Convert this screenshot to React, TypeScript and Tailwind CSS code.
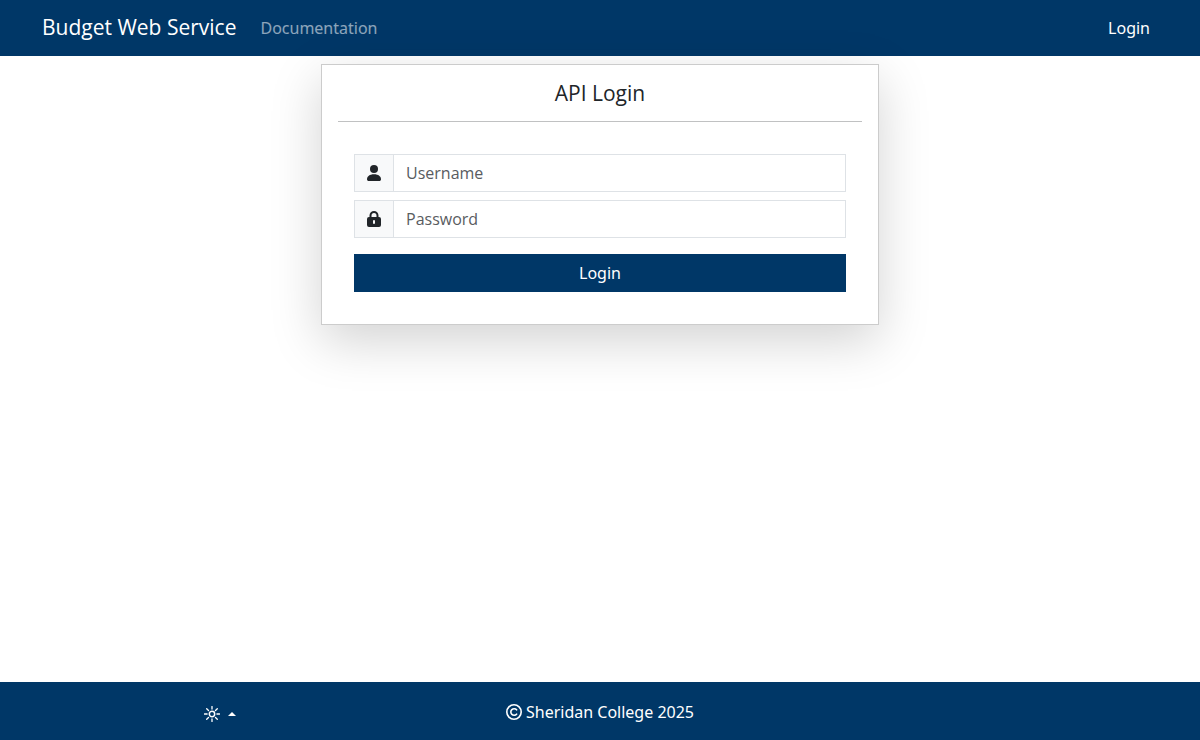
import type { ReactNode } from "react";

function Icon({ children }: { children: ReactNode }) {
  return (
    <svg viewBox="0 0 16 16" className="size-4 shrink-0" fill="currentColor" aria-hidden="true">
      {children}
    </svg>
  );
}

function PersonIcon() {
  return (
    <Icon>
      <circle cx="8" cy="4" r="4" />
      <path d="M1 14.2C1 11.5 3.5 9.3 8 9.3s7 2.2 7 4.9c0 1.1-.7 1.8-1.8 1.8H2.8C1.7 16 1 15.3 1 14.2Z" />
    </Icon>
  );
}

function LockIcon() {
  return (
    <Icon>
      <path
        fillRule="evenodd"
        d="M3.5 6V4.5a4.5 4.5 0 0 1 9 0V6H13a2 2 0 0 1 2 2v6a2 2 0 0 1-2 2H3a2 2 0 0 1-2-2V8a2 2 0 0 1 2-2Zm2 0h5V4.5a2.5 2.5 0 0 0-5 0ZM8 9a1 1 0 0 0-1 1v2a1 1 0 0 0 2 0v-2a1 1 0 0 0-1-1Z"
      />
    </Icon>
  );
}

function SunIcon() {
  return (
    <Icon>
      <circle cx="8" cy="8" r="2.7" fill="none" stroke="currentColor" strokeWidth="1.5" />
      <path
        d="M8 .5v2.6M8 12.9v2.6M.5 8h2.6M12.9 8h2.6M2.7 2.7l1.8 1.8M11.5 11.5l1.8 1.8M2.7 13.3l1.8-1.8M11.5 4.5l1.8-1.8"
        stroke="currentColor"
        strokeWidth="1.3"
        strokeLinecap="round"
      />
    </Icon>
  );
}

function CopyrightIcon() {
  return (
    <Icon>
      <circle cx="8" cy="8" r="7.2" fill="none" stroke="currentColor" strokeWidth="1.6" />
      <path d="M10.6 10.2a3.3 3.3 0 1 1 0-4.4" fill="none" stroke="currentColor" strokeWidth="1.6" strokeLinecap="round" />
    </Icon>
  );
}

export default function App() {
  return (
    <div className="flex min-h-screen flex-col bg-white font-['Noto_Sans','Open_Sans',sans-serif] text-base text-[#212529]">
      <nav className="flex h-14 items-center bg-[#003767] pr-[50px] pl-[42px] text-white">
        <a href="#home" className="font-['Open_Sans',sans-serif] text-[21px]">Budget Web Service</a>
        <a href="#docs" className="ml-6 text-white/55">Documentation</a>
        <a href="#login" className="ml-auto">Login</a>
      </nav>
      <main className="flex-1 pt-2">
        <form className="mx-auto w-full max-w-[558px] border border-[#ccc] bg-white p-4 shadow-[0_16px_48px_rgba(0,0,0,0.175)]">
          <h1 className="border-b border-[#c0c1c2] pb-4 text-center font-['Open_Sans',sans-serif] text-[21px] leading-6">API Login</h1>
          <div className="px-4 pt-8 pb-4">
            <div className="mb-2 flex h-[38px] border border-[#dee2e6]">
              <label htmlFor="username" aria-label="Username" className="flex w-[39px] items-center justify-center border-r border-[#dee2e6] bg-[#f8f9fa]"><PersonIcon /></label>
              <input id="username" type="text" placeholder="Username" className="min-w-0 flex-1 px-3 font-['Open_Sans',sans-serif] placeholder:text-[#595c5f]" />
            </div>
            <div className="mb-4 flex h-[38px] border border-[#dee2e6]">
              <label htmlFor="password" aria-label="Password" className="flex w-[39px] items-center justify-center border-r border-[#dee2e6] bg-[#f8f9fa]"><LockIcon /></label>
              <input id="password" type="password" placeholder="Password" className="min-w-0 flex-1 px-3 font-['Open_Sans',sans-serif] placeholder:text-[#595c5f]" />
            </div>
            <button type="submit" className="h-[38px] w-full bg-[#003767] text-white">Login</button>
          </div>
        </form>
      </main>
      <footer className="grid h-[58px] grid-cols-3 items-center bg-[#003767] px-[30px] pt-[2px] text-white">
        <button type="button" aria-label="Theme" className="flex items-center gap-2 justify-self-center pt-1"><SunIcon /><span className="border-x-4 border-b-4 border-x-transparent border-b-white" /></button>
        <p className="flex items-center justify-center gap-1"><CopyrightIcon />Sheridan College 2025</p>
      </footer>
    </div>
  );
}
